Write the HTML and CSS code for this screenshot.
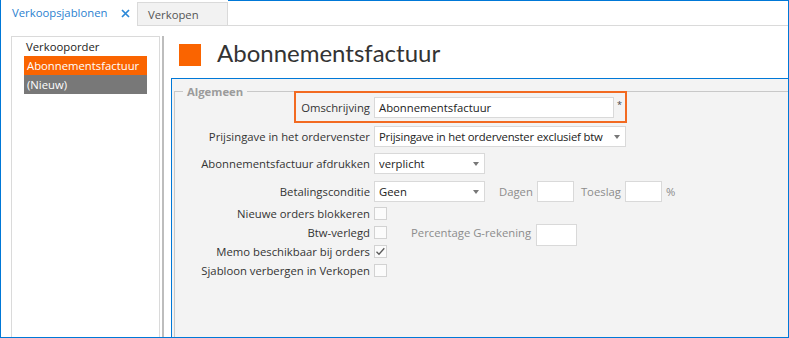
FILE: index.html
```html
<!DOCTYPE html>
<html lang="nl">
<head>
<meta charset="utf-8">
<title>Verkoopsjablonen</title>
<link rel="stylesheet" href="styles.css">
</head>
<body>
<div class="app">
  <div class="tabs">
    <div class="tab tab-active">Verkoopsjablonen<svg class="tab-close" viewBox="0 0 9 9" width="9" height="9"><path d="M1 1 L8 8 M8 1 L1 8" stroke="#2b88d8" stroke-width="1.7" fill="none"/></svg></div>
    <div class="tab tab-inactive">Verkopen</div>
    <div class="tab-fill"></div>
  </div>
  <div class="main">
    <div class="sidebar">
      <ul class="list">
        <li class="item">Verkooporder</li>
        <li class="item item-selected">Abonnementsfactuur</li>
        <li class="item item-new">(Nieuw)</li>
      </ul>
    </div>
    <div class="splitter"></div>
    <div class="content">
      <div class="title">
        <span class="swatch"></span>
        <h1 class="title-text">Abonnementsfactuur</h1>
      </div>
      <div class="panel">
        <div class="group-head"><span class="group-label">Algemeen</span></div>
        <div class="group-body">
          <div class="row row-first">
            <div class="highlight">
              <span class="label label-short">Omschrijving</span>
              <span class="input input-wide">Abonnementsfactuur</span>
              <span class="required">*</span>
            </div>
          </div>
          <div class="row row-2">
            <span class="label">Prijsingave in het ordervenster</span>
            <span class="combo combo-wide"><span class="combo-text combo-text-tight">Prijsingave in het ordervenster exclusief btw</span><span class="arrow"></span></span>
          </div>
          <div class="row row-3">
            <span class="label">Abonnementsfactuur afdrukken</span>
            <span class="combo"><span class="combo-text">verplicht</span><span class="arrow"></span></span>
          </div>
          <div class="row row-4">
            <span class="label">Betalingsconditie</span>
            <span class="combo"><span class="combo-text">Geen</span><span class="arrow"></span></span>
            <span class="muted muted-dagen">Dagen</span>
            <span class="input input-small"></span>
            <span class="muted muted-toeslag">Toeslag</span>
            <span class="input input-small"></span>
            <span class="muted muted-pct">%</span>
          </div>
          <div class="row check-row check-first">
            <span class="label">Nieuwe orders blokkeren</span>
            <span class="checkbox"></span>
          </div>
          <div class="row check-row">
            <span class="label">Btw-verlegd</span>
            <span class="checkbox"></span>
            <span class="muted muted-perc">Percentage G-rekening</span>
            <span class="input input-perc"></span>
          </div>
          <div class="row check-row">
            <span class="label">Memo beschikbaar bij orders</span>
            <span class="checkbox"><svg class="check" viewBox="0 0 13 13" width="13" height="13"><path d="M2.5 6.8 L5 9.3 L10.3 3.2" fill="none" stroke="#5a5a5a" stroke-width="1.3"/></svg></span>
          </div>
          <div class="row check-row">
            <span class="label">Sjabloon verbergen in Verkopen</span>
            <span class="checkbox"></span>
          </div>
        </div>
      </div>
    </div>
  </div>
</div>
</body>
</html>
```
FILE: styles.css
```css
* { box-sizing: border-box; }
html, body { margin: 0; padding: 0; background: #fff; }
body {
  font-family: "Open Sans", "Lato", sans-serif;
  font-size: 11.3px;
  color: #333;
  width: 789px;
  height: 338px;
  overflow: hidden;
}
.app {
  width: 789px;
  height: 338px;
  display: flex;
  flex-direction: column;
  border-left: 1px solid #0078d7;
  border-right: 1px solid #0078d7;
  border-bottom: 1px solid #0078d7;
  overflow: hidden;
}

/* tabs */
.tabs { display: flex; height: 26px; flex: none; }
.tab { display: flex; align-items: center; }
.tab-active {
  width: 136px;
  padding-left: 11px;
  padding-bottom: 1px;
  color: #2b7fd0;
  background: #fff;
}
.tab-close {
  display: block;
  margin-left: 14px;
  margin-top: 1px;
  flex: none;
}
.tab-inactive {
  margin-top: 2px;
  width: 91px;
  padding-left: 10px;
  background: #f2f2f2;
  border: 1px solid #dadada;
  color: #555;
}
.tab-fill {
  flex: 1;
  border-top: 1px solid #0078d7;
  border-bottom: 1px solid #dadada;
}

/* main */
.main { flex: 1; display: flex; min-height: 0; }
.sidebar { width: 160px; padding: 10px 0 0 10px; flex: none; display: flex; }
.list {
  list-style: none;
  margin: 0;
  padding: 0;
  width: 149px;
  border: 1px solid #dadada;
  border-bottom: none;
}
.item {
  height: 19px;
  line-height: 19px;
  margin-left: 12px;
  width: 123px;
  padding-left: 2px;
  color: #222;
}
.item-selected { background: #fa6400; color: #fff; padding-left: 3px; }
.item-new { background: #787878; color: #fff; padding-left: 3px; }

.splitter {
  width: 2px;
  margin-left: 1px;
  margin-top: 10px;
  background: #bdbdbd;
  flex: none;
}

.content {
  flex: 1;
  display: flex;
  flex-direction: column;
  padding-left: 7px;
  min-width: 0;
}
.title { display: flex; align-items: flex-start; flex: none; height: 52px; }
.swatch {
  width: 22px;
  height: 22px;
  background: #fa6400;
  margin: 18px 0 0 8px;
  flex: none;
}
.title-text {
  margin: 12px 0 0 16px;
  font-family: "Lato", "Open Sans", sans-serif;
  font-size: 24px;
  line-height: 29px;
  font-weight: normal;
  color: #333;
}

.panel {
  flex: 1;
  background: #f3f3f3;
  border-left: 1px solid #0078d7;
  border-top: 1px solid #0078d7;
  display: flex;
  flex-direction: column;
  overflow: hidden;
}
.group-head {
  margin-top: 5px;
  height: 16px;
  display: flex;
  align-items: flex-end;
  flex: none;
}
.group-head::before {
  content: "";
  width: 8px;
  height: 8px;
  margin-left: 2px;
  border-top: 1px solid #c8c8c8;
  border-left: 1px solid #c8c8c8;
  box-sizing: content-box;
}
.group-head::after {
  content: "";
  flex: 1;
  height: 8px;
  border-top: 1px solid #c8c8c8;
}
.group-label {
  align-self: center;
  padding: 0 4px;
  font-weight: bold;
  color: #9b9b9b;
  line-height: 16px;
}
.group-body {
  flex: 1;
  margin-left: 2px;
  border-left: 1px solid #c8c8c8;
}

.row { display: flex; align-items: center; height: 21px; }
.label { width: 195px; text-align: right; flex: none; white-space: nowrap; }
.row-first { height: 32px; margin-top: -9px; }
.highlight {
  margin-left: 119px;
  display: flex;
  align-items: center;
  border: 2px solid #f26a21;
  padding: 4px 3px 3px 3px;
}
.label-short { width: 71px; }
.row-2 { margin-top: 3px; }
.row-3 { margin-top: 6px; }
.row-4 { margin-top: 7px; }

.input {
  display: block;
  margin-left: 4px;
  height: 21px;
  background: #fff;
  border: 1px solid #d9d9d9;
  padding-left: 4px;
  line-height: 19px;
  color: #222;
  flex: none;
}
.input-wide { width: 240px; }
.required {
  align-self: flex-start;
  margin: 3px 0 0 3px;
  width: 5px;
  font-size: 9px;
  line-height: 10px;
  color: #444;
}

.combo {
  display: flex;
  align-items: center;
  margin-left: 4px;
  width: 111px;
  height: 21px;
  background: #fff;
  border: 1px solid #d9d9d9;
  padding-left: 4px;
  color: #222;
  flex: none;
}
.combo-wide { width: 252px; }
.combo-text { flex: 1; white-space: nowrap; overflow: hidden; }
.combo-text-tight { letter-spacing: -0.2px; }
.arrow {
  width: 0;
  height: 0;
  border-left: 3.5px solid transparent;
  border-right: 3.5px solid transparent;
  border-top: 4px solid #777;
  margin: 1px 5px 0 4px;
}

.muted { color: #8c8c8c; flex: none; }
.muted-dagen { margin-left: 14px; }
.muted-toeslag { margin-left: 7px; }
.muted-pct { margin-left: 4px; }
.input-small { width: 37px; }
.muted-dagen + .input-small { margin-left: 4px; }

.check-row { height: 19px; }
.check-first { margin-top: 2px; }
.checkbox {
  margin-left: 4px;
  width: 13px;
  height: 13px;
  border: 1px solid #d2d2d2;
  background: #fbfbfb;
  flex: none;
}
.check { display: block; margin: -1px 0 0 -1px; }
.muted-perc { margin-left: 24px; }
.input-perc { width: 41px; height: 22px; margin-left: 5px; align-self: flex-start; margin-top: 1px; }
```
